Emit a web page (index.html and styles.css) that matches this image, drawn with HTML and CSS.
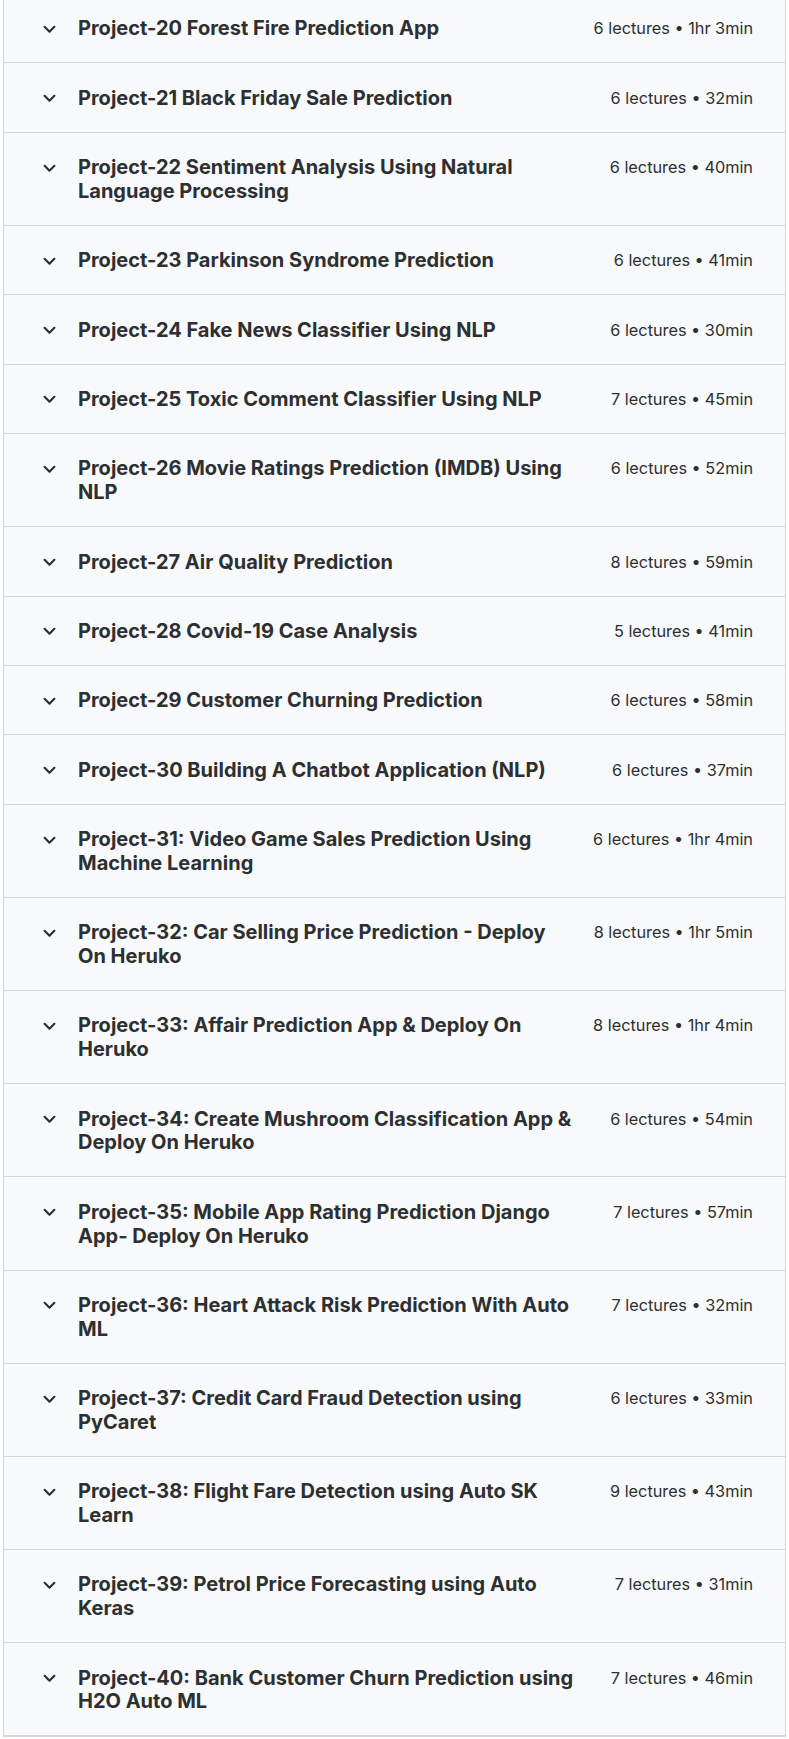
FILE: index.html
```html
<!DOCTYPE html>
<html lang="en">
<head>
<meta charset="utf-8">
<title>Curriculum</title>
<link rel="stylesheet" href="styles.css">
</head>
<body>
<div class="curriculum">
  <div class="section"><span class="chev"><svg viewBox="0 0 12 8"><path d="M1.5 1.5 6 6l4.5-4.5"/></svg></span><span class="title">Project-20 Forest Fire Prediction App</span><span class="meta">6 lectures • 1hr 3min</span></div>
  <div class="section"><span class="chev"><svg viewBox="0 0 12 8"><path d="M1.5 1.5 6 6l4.5-4.5"/></svg></span><span class="title">Project-21 Black Friday Sale Prediction</span><span class="meta">6 lectures • 32min</span></div>
  <div class="section"><span class="chev"><svg viewBox="0 0 12 8"><path d="M1.5 1.5 6 6l4.5-4.5"/></svg></span><span class="title">Project-22 Sentiment Analysis Using Natural Language Processing</span><span class="meta">6 lectures • 40min</span></div>
  <div class="section"><span class="chev"><svg viewBox="0 0 12 8"><path d="M1.5 1.5 6 6l4.5-4.5"/></svg></span><span class="title">Project-23 Parkinson Syndrome Prediction</span><span class="meta">6 lectures • 41min</span></div>
  <div class="section"><span class="chev"><svg viewBox="0 0 12 8"><path d="M1.5 1.5 6 6l4.5-4.5"/></svg></span><span class="title">Project-24 Fake News Classifier Using NLP</span><span class="meta">6 lectures • 30min</span></div>
  <div class="section"><span class="chev"><svg viewBox="0 0 12 8"><path d="M1.5 1.5 6 6l4.5-4.5"/></svg></span><span class="title">Project-25 Toxic Comment Classifier Using NLP</span><span class="meta">7 lectures • 45min</span></div>
  <div class="section"><span class="chev"><svg viewBox="0 0 12 8"><path d="M1.5 1.5 6 6l4.5-4.5"/></svg></span><span class="title">Project-26 Movie Ratings Prediction (IMDB) Using NLP</span><span class="meta">6 lectures • 52min</span></div>
  <div class="section"><span class="chev"><svg viewBox="0 0 12 8"><path d="M1.5 1.5 6 6l4.5-4.5"/></svg></span><span class="title">Project-27 Air Quality Prediction</span><span class="meta">8 lectures • 59min</span></div>
  <div class="section"><span class="chev"><svg viewBox="0 0 12 8"><path d="M1.5 1.5 6 6l4.5-4.5"/></svg></span><span class="title">Project-28 Covid-19 Case Analysis</span><span class="meta">5 lectures • 41min</span></div>
  <div class="section"><span class="chev"><svg viewBox="0 0 12 8"><path d="M1.5 1.5 6 6l4.5-4.5"/></svg></span><span class="title">Project-29 Customer Churning Prediction</span><span class="meta">6 lectures • 58min</span></div>
  <div class="section"><span class="chev"><svg viewBox="0 0 12 8"><path d="M1.5 1.5 6 6l4.5-4.5"/></svg></span><span class="title">Project-30 Building A Chatbot Application (NLP)</span><span class="meta">6 lectures • 37min</span></div>
  <div class="section"><span class="chev"><svg viewBox="0 0 12 8"><path d="M1.5 1.5 6 6l4.5-4.5"/></svg></span><span class="title">Project-31: Video Game Sales Prediction Using Machine Learning</span><span class="meta">6 lectures • 1hr 4min</span></div>
  <div class="section"><span class="chev"><svg viewBox="0 0 12 8"><path d="M1.5 1.5 6 6l4.5-4.5"/></svg></span><span class="title">Project-32: Car Selling Price Prediction - Deploy On Heruko</span><span class="meta">8 lectures • 1hr 5min</span></div>
  <div class="section"><span class="chev"><svg viewBox="0 0 12 8"><path d="M1.5 1.5 6 6l4.5-4.5"/></svg></span><span class="title">Project-33: Affair Prediction App &amp; Deploy On Heruko</span><span class="meta">8 lectures • 1hr 4min</span></div>
  <div class="section"><span class="chev"><svg viewBox="0 0 12 8"><path d="M1.5 1.5 6 6l4.5-4.5"/></svg></span><span class="title">Project-34: Create Mushroom Classification App &amp; Deploy On Heruko</span><span class="meta">6 lectures • 54min</span></div>
  <div class="section"><span class="chev"><svg viewBox="0 0 12 8"><path d="M1.5 1.5 6 6l4.5-4.5"/></svg></span><span class="title">Project-35: Mobile App Rating Prediction Django App- Deploy On Heruko</span><span class="meta">7 lectures • 57min</span></div>
  <div class="section"><span class="chev"><svg viewBox="0 0 12 8"><path d="M1.5 1.5 6 6l4.5-4.5"/></svg></span><span class="title">Project-36: Heart Attack Risk Prediction With Auto ML</span><span class="meta">7 lectures • 32min</span></div>
  <div class="section"><span class="chev"><svg viewBox="0 0 12 8"><path d="M1.5 1.5 6 6l4.5-4.5"/></svg></span><span class="title">Project-37: Credit Card Fraud Detection using PyCaret</span><span class="meta">6 lectures • 33min</span></div>
  <div class="section"><span class="chev"><svg viewBox="0 0 12 8"><path d="M1.5 1.5 6 6l4.5-4.5"/></svg></span><span class="title">Project-38: Flight Fare Detection using Auto SK Learn</span><span class="meta">9 lectures • 43min</span></div>
  <div class="section"><span class="chev"><svg viewBox="0 0 12 8"><path d="M1.5 1.5 6 6l4.5-4.5"/></svg></span><span class="title">Project-39: Petrol Price Forecasting using Auto Keras</span><span class="meta">7 lectures • 31min</span></div>
  <div class="section"><span class="chev"><svg viewBox="0 0 12 8"><path d="M1.5 1.5 6 6l4.5-4.5"/></svg></span><span class="title">Project-40: Bank Customer Churn Prediction using H2O Auto ML</span><span class="meta">7 lectures • 46min</span></div>
</div>
</body>
</html>
```
FILE: styles.css
```css
html, body {
  margin: 0;
  padding: 0;
  background: #ffffff;
}

body {
  font-family: Inter, "Noto Sans", "Liberation Sans", sans-serif;
  color: #2d2f31;
}

.curriculum {
  margin: -6px 0 0 3px;
  width: 783px;
  box-sizing: border-box;
  border: 1px solid #d1d7dc;
  border-top: none;
  background: #f7f9fa;
}

.section {
  display: flex;
  align-items: flex-start;
  padding: 23.4px 32px 21.2px 39px;
  border-bottom: 1px solid #d1d7dc;
}

.chev {
  flex: none;
  width: 14px;
  height: 23.8px;
  display: flex;
  align-items: center;
  margin-right: 21px;
}

.chev svg {
  width: 13px;
  height: 9px;
  fill: none;
  stroke: #2d2f31;
  stroke-width: 2;
  stroke-linecap: round;
  stroke-linejoin: round;
}

.title {
  flex: 1;
  font-size: 20px;
  font-weight: 700;
  line-height: 23.8px;
}

.meta {
  flex: none;
  margin-left: 32px;
  font-size: 16.3px;
  line-height: 23.8px;
  white-space: nowrap;
}
```
